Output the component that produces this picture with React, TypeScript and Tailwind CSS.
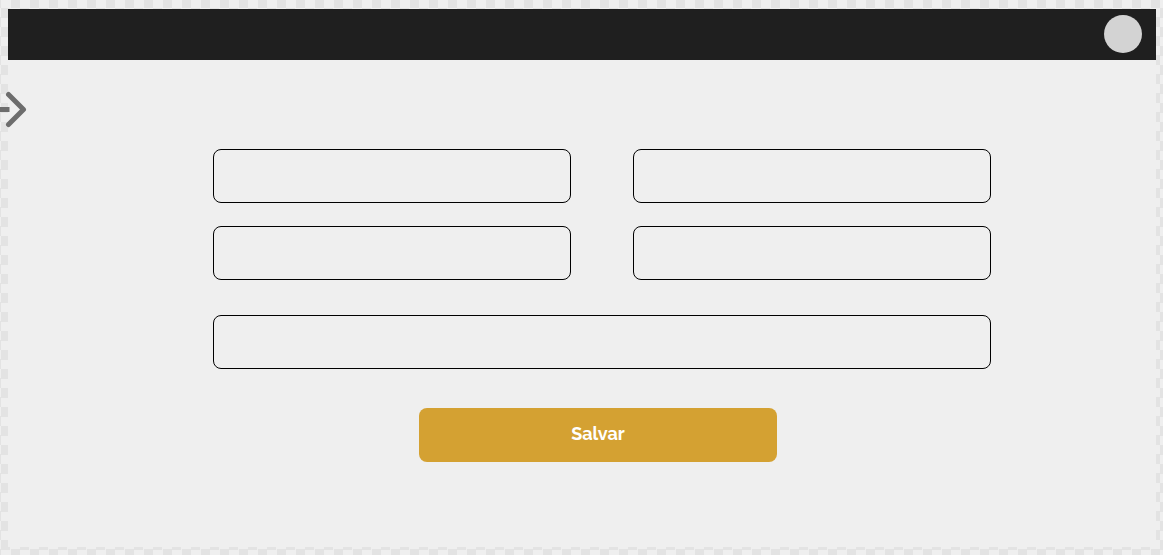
export default function App() {
  const field =
    "h-[54px] w-full rounded-lg border border-black bg-transparent px-4 text-base outline-none";
  return (
    <div className="min-h-screen bg-[#efefef] bg-[conic-gradient(#efefef_25%,#e3e3e3_0_50%,#efefef_0_75%,#e3e3e3_0)] bg-size-[19px_19px] bg-position-[1px_8px] pt-[9px] pr-[7px] pb-2 pl-2 font-['Raleway','Lato',sans-serif]">
      <div className="min-h-[calc(100vh-17px)] bg-[#efefef]">
        <header className="flex h-[51px] items-start justify-end bg-[#1f1f1f] pt-1.5 pr-[14px]">
          <button type="button" aria-label="Perfil" className="size-[38px] rounded-full bg-[#d3d3d3]" />
        </header>
        <button type="button" aria-label="Avançar" className="-ml-2 mt-[31px] block">
          <svg width="28" height="38" viewBox="0 0 28 38" fill="none" stroke="#6d6d6d" strokeWidth="5">
            <path d="M0 18.5H9.5" />
            <path d="M8.5 3.5L23.5 18.5L8.5 33.5" strokeLinecap="round" strokeLinejoin="round" />
          </svg>
        </button>
        <form className="mr-[165px] ml-[205px] mt-5" onSubmit={(e) => e.preventDefault()}>
          <div className="grid grid-cols-2 gap-x-[62px] gap-y-[23px]">
            <input type="text" aria-label="Campo 1" className={field} />
            <input type="text" aria-label="Campo 2" className={field} />
            <input type="text" aria-label="Campo 3" className={field} />
            <input type="text" aria-label="Campo 4" className={field} />
          </div>
          <input type="text" aria-label="Campo 5" className={`mt-[35px] block ${field}`} />
          <div className="mt-[39px] flex justify-center pr-2">
            <button type="submit" className="h-[54px] w-[358px] rounded-lg bg-[#d4a132] pb-0.5 text-lg font-bold text-white">
              Salvar
            </button>
          </div>
        </form>
      </div>
    </div>
  );
}
